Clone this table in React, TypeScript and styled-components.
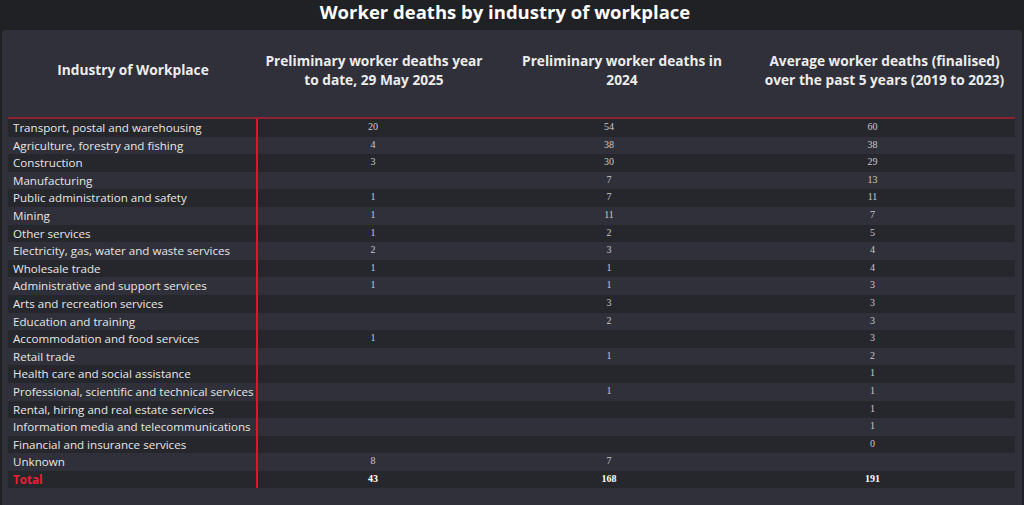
import styled, { createGlobalStyle } from 'styled-components';

interface Row {
  industry: string
  ytd?: number
  y2024?: number
  avg?: number
}

const rows: Row[] = [
  { industry: 'Transport, postal and warehousing', ytd: 20, y2024: 54, avg: 60 },
  { industry: 'Agriculture, forestry and fishing', ytd: 4, y2024: 38, avg: 38 },
  { industry: 'Construction', ytd: 3, y2024: 30, avg: 29 },
  { industry: 'Manufacturing', y2024: 7, avg: 13 },
  { industry: 'Public administration and safety', ytd: 1, y2024: 7, avg: 11 },
  { industry: 'Mining', ytd: 1, y2024: 11, avg: 7 },
  { industry: 'Other services', ytd: 1, y2024: 2, avg: 5 },
  { industry: 'Electricity, gas, water and waste services', ytd: 2, y2024: 3, avg: 4 },
  { industry: 'Wholesale trade', ytd: 1, y2024: 1, avg: 4 },
  { industry: 'Administrative and support services', ytd: 1, y2024: 1, avg: 3 },
  { industry: 'Arts and recreation services', y2024: 3, avg: 3 },
  { industry: 'Education and training', y2024: 2, avg: 3 },
  { industry: 'Accommodation and food services', ytd: 1, avg: 3 },
  { industry: 'Retail trade', y2024: 1, avg: 2 },
  { industry: 'Health care and social assistance', avg: 1 },
  { industry: 'Professional, scientific and technical services', y2024: 1, avg: 1 },
  { industry: 'Rental, hiring and real estate services', avg: 1 },
  { industry: 'Information media and telecommunications', avg: 1 },
  { industry: 'Financial and insurance services', avg: 0 },
  { industry: 'Unknown', ytd: 8, y2024: 7 },
]

// totals as published (the 5 year average is rounded separately)
const totals = { ytd: 43, y2024: 168, avg: 191 }

const GlobalStyle = createGlobalStyle`
  html, body {
    margin: 0;
    padding: 0;
    background: #202125;
  }
  body {
    font-family: "Open Sans", "Noto Sans", sans-serif;
    width: 1024px;
    height: 505px;
    overflow: hidden;
  }
`

const Page = styled.div`
  display: flex;
  flex-direction: column;
  height: 505px;
`

const Title = styled.h1`
  margin: 0;
  height: 30px;
  line-height: 24px;
  font-size: 18.5px;
  font-weight: 700;
  color: #ffffff;
  text-align: center;
  padding-right: 14px;
`

const Panel = styled.section`
  flex: 1;
  margin: 0 2px;
  background: #2f3039;
  border-radius: 4px 4px 0 0;
  padding: 0 7px 0 6px;
`

const HeadRow = styled.div`
  display: grid;
  grid-template-columns: 250px 232px 264px 261px;
  height: 79px;
  padding-bottom: 8px;
  align-items: center;
  border-bottom: 2px solid #8e2330;
`

const HeadCell = styled.div<{ $inset?: number }>`
  color: #ececec;
  font-size: 13.7px;
  font-weight: 700;
  line-height: 19px;
  text-align: center;
  padding: 0 ${p => p.$inset ?? 2}px;
`

const Body = styled.div`
  display: flex;
  flex-direction: column;
`

const BodyRow = styled.div<{ $odd: boolean }>`
  display: grid;
  grid-template-columns: 250px 230px 242px 285px;
  height: 17.6px;
  background: ${p => (p.$odd ? '#26272c' : '#2f3039')};
`

const Label = styled.div<{ $total?: boolean }>`
  border-right: 2px solid #e8102c;
  padding-left: 5px;
  font-size: 11.6px;
  line-height: 17.6px;
  white-space: nowrap;
  color: ${p => (p.$total ? '#ee1c34' : '#e6e6e6')};
  font-weight: ${p => (p.$total ? 700 : 400)};
`

const Num = styled.div<{ $total?: boolean }>`
  font-family: "Liberation Serif", "DejaVu Serif", serif;
  font-size: 10px;
  line-height: 15px;
  text-align: center;
  color: ${p => (p.$total ? '#ffffff' : '#c9c9cc')};
  font-weight: ${p => (p.$total ? 700 : 400)};
`

export default function App() {
  return (
    <>
      <GlobalStyle />
      <Page>
        <Title>Worker deaths by industry of workplace</Title>
        <Panel>
          <HeadRow>
            <HeadCell>Industry of Workplace</HeadCell>
            <HeadCell>Preliminary worker deaths year to date, 29 May 2025</HeadCell>
            <HeadCell $inset={28}>Preliminary worker deaths in 2024</HeadCell>
            <HeadCell $inset={0}>Average worker deaths (finalised) over the past 5 years (2019 to 2023)</HeadCell>
          </HeadRow>
          <Body>
            {rows.map((r, i) => (
              <BodyRow key={r.industry} $odd={i % 2 === 0}>
                <Label>{r.industry}</Label>
                <Num>{r.ytd}</Num>
                <Num>{r.y2024}</Num>
                <Num>{r.avg}</Num>
              </BodyRow>
            ))}
            <BodyRow $odd={true}>
              <Label $total>Total</Label>
              <Num $total>{totals.ytd}</Num>
              <Num $total>{totals.y2024}</Num>
              <Num $total>{totals.avg}</Num>
            </BodyRow>
          </Body>
        </Panel>
      </Page>
    </>
  )
}
